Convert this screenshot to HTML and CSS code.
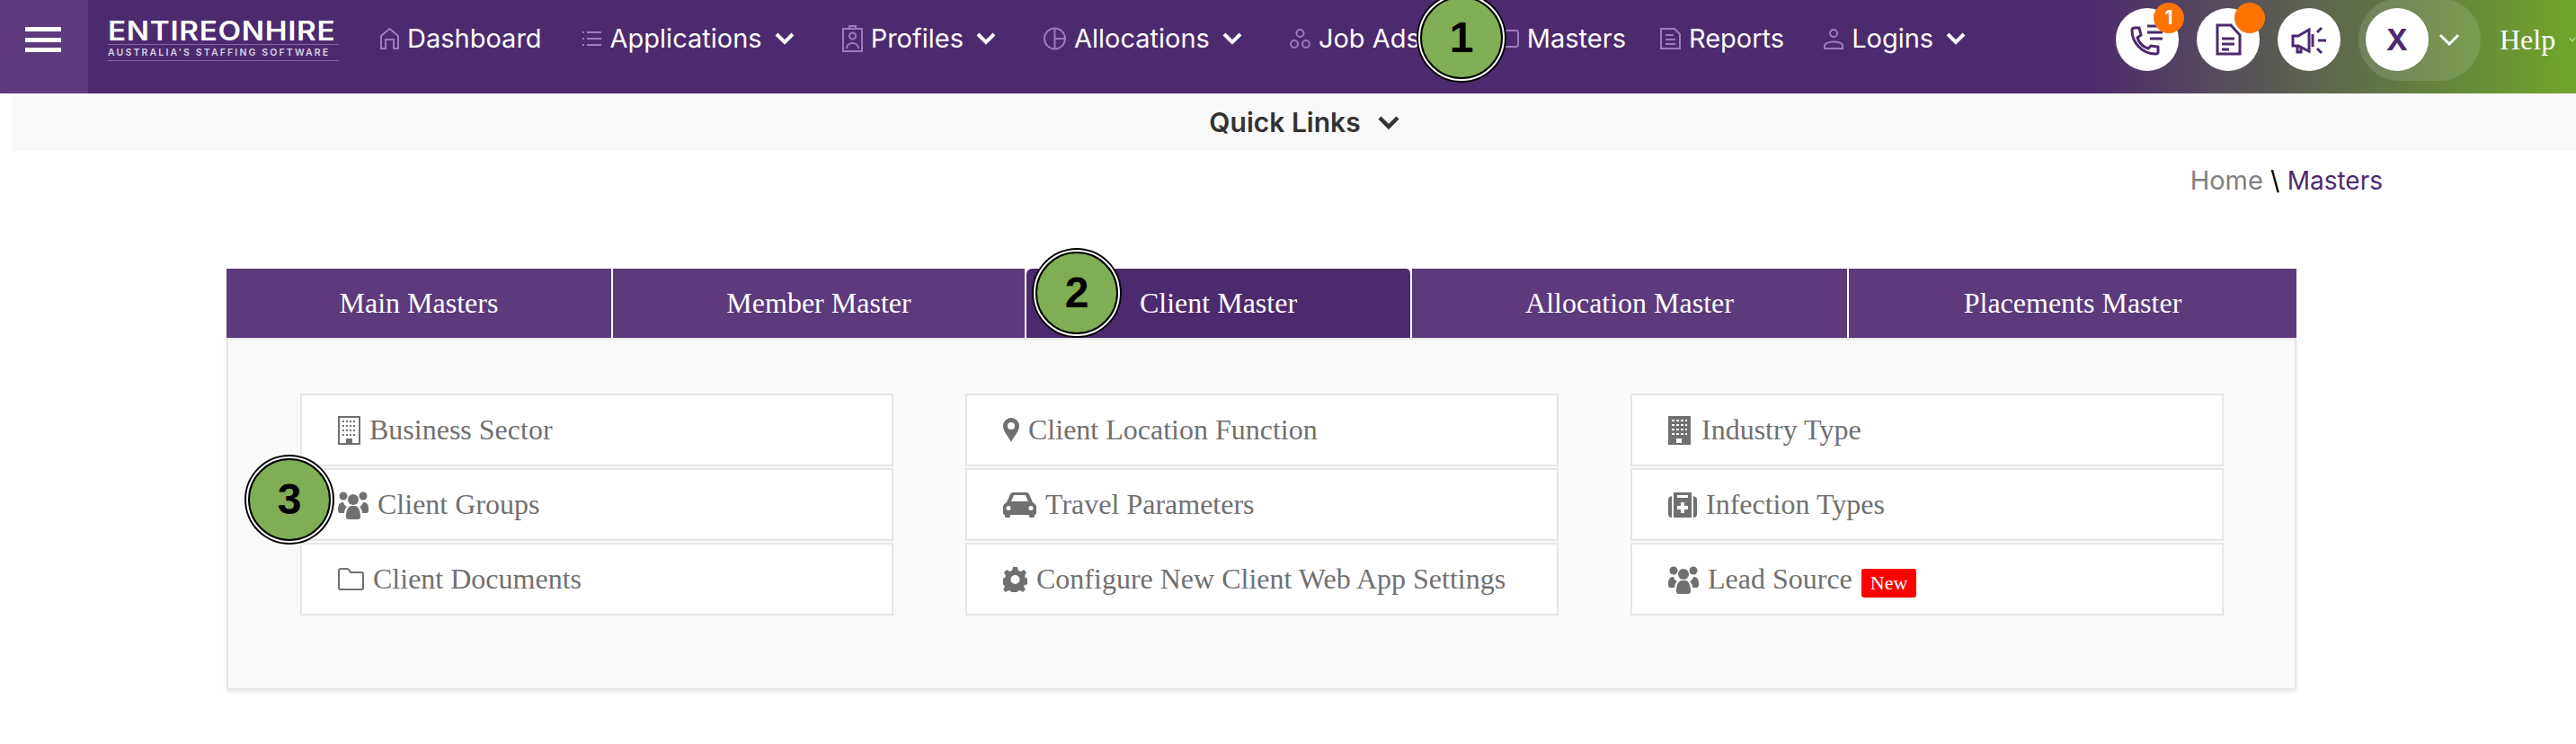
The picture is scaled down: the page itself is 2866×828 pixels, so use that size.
FILE: index.html
```html
<!DOCTYPE html>
<html lang="en">
<head>
  <meta charset="UTF-8">
  <title>Masters</title>
  <link rel="stylesheet" href="styles.css">
</head>
<body>

<!-- Top Navigation -->
<header class="topbar">
  <div class="menu-toggle"><span></span><span></span><span></span></div>
  <div class="topbar-row">
    <div class="logo">
      <div class="logo-name">ENTIREONHIRE</div>
      <div class="logo-tag">AUSTRALIA'S STAFFING SOFTWARE</div>
    </div>
    <nav class="nav">
      <a class="nav-item">
        <svg class="nav-icon" width="21" height="24" viewBox="0 0 21 24"><path d="M1 23V9l9.5-8L20 9v14h-5V13H6v10z"/></svg>Dashboard
      </a>
      <a class="nav-item">
        <svg class="nav-icon" width="23" height="24" viewBox="0 0 23 24"><path d="M6 5h16M6 12h16M6 19h16M1 5h2M1 12h2M1 19h2"/></svg>Applications
        <svg class="chev" width="22" height="14" viewBox="0 0 22 14"><path d="M2 2l9 9 9-9"/></svg>
      </a>
      <a class="nav-item">
        <svg class="nav-icon" width="23" height="30" viewBox="0 0 23 30"><path d="M1 4h21v25H1zM8 4V1h7v3"/><circle cx="11.5" cy="12" r="3.5"/><path d="M5 26c0-8 13-8 13 0"/></svg>Profiles
        <svg class="chev" width="22" height="14" viewBox="0 0 22 14"><path d="M2 2l9 9 9-9"/></svg>
      </a>
      <a class="nav-item">
        <svg class="nav-icon" width="25" height="26" viewBox="0 0 25 26"><circle cx="12.5" cy="13" r="11.5"/><path d="M12.5 1.500v23M12.500 13h11.500"/></svg>Allocations
        <svg class="chev" width="22" height="14" viewBox="0 0 22 14"><path d="M2 2l9 9 9-9"/></svg>
      </a>
      <a class="nav-item nav-jobs">
        <svg class="nav-icon" width="23" height="24" viewBox="0 0 23 24"><circle cx="11.500" cy="6" r="4"/><circle cx="5" cy="18" r="4"/><circle cx="18" cy="18" r="4"/></svg>Job Ads
      </a>
      <a class="nav-item nav-masters">
        <svg class="nav-icon" width="24" height="20" viewBox="0 0 24 20"><rect x="1" y="1" width="22" height="18" rx="2"/></svg>Masters
      </a>
      <a class="nav-item">
        <svg class="nav-icon" width="23" height="24" viewBox="0 0 23 24"><path d="M1 1h15l6 6v16H1zM6 8h9M6 13h11M6 18h11"/></svg>Reports
      </a>
      <a class="nav-item">
        <svg class="nav-icon" width="22" height="24" viewBox="0 0 22 24"><circle cx="11" cy="6" r="4"/><path d="M1 23v-3c0-6 20-6 20 0v3z"/></svg>Logins
        <svg class="chev" width="22" height="14" viewBox="0 0 22 14"><path d="M2 2l9 9 9-9"/></svg>
      </a>
    </nav>
    <div class="tools">
      <div class="tool">
        <svg width="70" height="70" viewBox="0 0 70 70" class="tool-icon"><path d="M18 25c0-2 1-3 3-3h5l2 8-4 3c2 6 6 10 12 12l3-3 8 1v6c0 1-1 2-3 2-14 0-26-12-26-26zM35 20h17M35 27h17M38 34h14"/></svg>
        <span class="dot">1</span>
      </div>
      <div class="tool">
        <svg width="70" height="70" viewBox="0 0 70 70" class="tool-icon"><path d="M23 19h15l10 11v21H23zM28 34h14M28 40h14M28 46h8"/></svg>
        <span class="dot"></span>
      </div>
      <div class="tool">
        <svg width="70" height="70" viewBox="0 0 70 70" class="tool-icon"><path d="M17 31h6l12-7v24l-12-6h-6zM22 42v7h4v-6M39 29v14M44 27l5-5M45 36h9M44 45l5 5"/></svg>
      </div>
      <div class="user-pill">
        <div class="tool user-x">X</div>
        <svg class="chev chev-thin" width="24" height="14" viewBox="0 0 24 14"><path d="M2 2l10 10L22 2"/></svg>
      </div>
      <div class="help">Help<svg class="chev chev-thin" width="24" height="14" viewBox="0 0 24 14"><path d="M2 2l10 10L22 2"/></svg></div>
    </div>
  </div>
</header>

<!-- Quick Links -->
<div class="quick-links">
  <span>Quick Links</span>
  <svg class="chev chev-dark" width="26" height="16" viewBox="0 0 26 16"><path d="M3 3l10 10L23 3"/></svg>
</div>

<div class="breadcrumb"><span class="crumb-home">Home</span> <span class="crumb-sep">\</span> <span class="crumb-page">Masters</span></div>

<!-- Masters Tabs -->
<div class="masters">
  <div class="tabs">
    <div class="tab">Main Masters</div>
    <div class="tab">Member Master</div>
    <div class="tab tab-active">Client Master</div>
    <div class="tab">Allocation Master</div>
    <div class="tab">Placements Master</div>
  </div>
  <div class="panel">
    <a class="card">
      <svg class="ico" width="25" height="32" viewBox="0 0 25 32"><path fill-rule="evenodd" d="M0 0h25v32H0zM2 2v28h7v-5h7v5h7V2z"/><path d="M5 5h2v2H5zM9 5h2v2H9zM13 5h2v2h-2zM17 5h2v2h-2zM5 10h2v2H5zM9 10h2v2H9zM13 10h2v2h-2zM17 10h2v2h-2zM5 15h2v2H5zM9 15h2v2H9zM13 15h2v2h-2zM17 15h2v2h-2zM5 20h2v2H5zM9 20h2v2H9zM13 20h2v2h-2zM17 20h2v2h-2z"/></svg>
      Business Sector
    </a>
    <a class="card">
      <svg class="ico" width="18" height="27" viewBox="0 0 18 27"><path fill-rule="evenodd" d="M9 0a9 9 0 0 1 9 9c0 6-6 12-9 18C6 21 0 15 0 9a9 9 0 0 1 9-9zm0 5a4 4 0 1 0 0 8 4 4 0 0 0 0-8z"/></svg>
      Client Location Function
    </a>
    <a class="card">
      <svg class="ico ico-wide-gap" width="25" height="32" viewBox="0 0 25 32"><path fill-rule="evenodd" d="M0 0h25v32H0zM4 4v2h3V4zM9 4v2h3V4zM14 4v2h3V4zM19 4v2h2V4zM4 9v2h3V9zM9 9v2h3V9zM14 9v2h3V9zM19 9v2h2V9zM4 14v2h3v-2zM9 14v2h3v-2zM14 14v2h3v-2zM19 14v2h2v-2zM4 19v2h3v-2zM9 19v2h3v-2zM14 19v2h3v-2zM19 19v2h2v-2zM9 25v5h6v-5z"/></svg>
      Industry Type
    </a>
    <a class="card">
      <svg class="ico" width="34" height="32" viewBox="0 0 34 32"><circle cx="6" cy="6" r="4.500"/><circle cx="28" cy="6" r="4.500"/><circle cx="17" cy="10" r="6"/><path d="M0 21c0-6 2-8 6-8 1 3 2 4 4 5-2 2-3 4-3 7H2c-1 0-2-1-2-4zM34 21c0-6-2-8-6-8-1 3-2 4-4 5 2 2 3 4 3 7h5c1 0 2-1 2-4zM9 29c0-8 3-12 6-12h4c3 0 6 4 6 12 0 2-1 3-3 3H12c-2 0-3-1-3-3z"/></svg>
      Client Groups
    </a>
    <a class="card">
      <svg class="ico" width="37" height="28" viewBox="0 0 37 28"><path fill-rule="evenodd" d="M4 11L8 2c.5-1 1.500-2 3-2h15c1.500 0 2.500 1 3 2l4 9c2 1 4 3 4 5v7c0 1-1 2-2 2v1c0 2-1 2-3 2s-3 0-3-2v-1H8v1c0 2-1 2-3 2s-3 0-3-2v-1c-1 0-2-1-2-2v-7c0-2 2-4 4-5zm5-1h19l-3-7H12zM6 15a2.500 2.500 0 1 0 0 5 2.500 2.500 0 0 0 0-5zm25 0a2.500 2.500 0 1 0 0 5 2.500 2.500 0 0 0 0-5z"/></svg>
      Travel Parameters
    </a>
    <a class="card">
      <svg class="ico" width="32" height="28" viewBox="0 0 32 28"><path fill-rule="evenodd" d="M6 0h20v28H6zM10 3v3h12V3zM14 11v4h-4v4h4v4h4v-4h4v-4h-4v-4zM0 8c0-2 1-3 4-4v24c-3 0-4-2-4-4zM32 8c0-2-1-3-4-4v24c3 0 4-2 4-4z"/></svg>
      Infection Types
    </a>
    <a class="card">
      <svg class="ico ico-line" width="29" height="25" viewBox="0 0 29 25"><path d="M1 22V3c0-1 1-2 2-2h7c1 0 1.500.5 2 1l2 3h12c1 0 2 1 2 2v15c0 1-1 2-2 2H3c-1 0-2-1-2-2z"/></svg>
      Client Documents
    </a>
    <a class="card">
      <svg class="ico" width="27" height="28" viewBox="0 0 27 28"><path fill-rule="evenodd" d="M11 0h5l1 4 3 1 3-2 3 3-2 4 1 2 3 1v6l-4 1-1 2 2 3-3 3-3-2-3 1-1 3h-5l-1-3-3-1-3 2-3-3 2-3-1-2-3-1v-6l4-1 1-2-2-4 3-3 3 2 3-1zm2.500 9a5 5 0 1 0 0 10 5 5 0 0 0 0-10z"/></svg>
      Configure New Client Web App Settings
    </a>
    <a class="card">
      <svg class="ico" width="34" height="32" viewBox="0 0 34 32"><circle cx="6" cy="6" r="4.500"/><circle cx="28" cy="6" r="4.500"/><circle cx="17" cy="10" r="6"/><path d="M0 21c0-6 2-8 6-8 1 3 2 4 4 5-2 2-3 4-3 7H2c-1 0-2-1-2-4zM34 21c0-6-2-8-6-8-1 3-2 4-4 5 2 2 3 4 3 7h5c1 0 2-1 2-4zM9 29c0-8 3-12 6-12h4c3 0 6 4 6 12 0 2-1 3-3 3H12c-2 0-3-1-3-3z"/></svg>
      Lead Source <span class="badge-new">New</span>
    </a>
  </div>
</div>

<!-- Step Markers -->
<div class="step step-1">1</div>
<div class="step step-2">2</div>
<div class="step step-3">3</div>

</body>
</html>
```

FILE: styles.css
```css
/* General Styling */
html, body {
  margin: 0;
  padding: 0;
  overflow: hidden;
}

body {
  position: relative;
  height: 828px;
  background: #ffffff;
  font-family: "Liberation Serif", serif;
}

/* Top Navigation */
.topbar {
  display: flex;
  height: 104px;
  overflow: hidden;
  background: linear-gradient(90deg, #4c2a6e 81%, #6fa62a 100%);
}

.menu-toggle {
  width: 98px;
  flex: none;
  background: #5c3a7c;
  padding: 30px 0 0 28px;
  box-sizing: border-box;
}

.menu-toggle span {
  display: block;
  width: 40px;
  height: 5px;
  margin-bottom: 6.500px;
  background: #ffffff;
}

.topbar-row {
  flex: 1;
  display: flex;
  align-items: center;
  height: 88px;
  white-space: nowrap;
}

.logo {
  width: 257px;
  margin-left: 22px;
  color: #ffffff;
  font-family: Inter, sans-serif;
}

.logo-name {
  font-size: 30px;
  line-height: 29px;
  font-weight: 600;
  letter-spacing: 0.600px;
  height: 29px;
  transform-origin: left;
  transform: scaleX(1.11);
}

.logo-tag {
  border-top: 1px solid #84699f;
  border-bottom: 1px solid #84699f;
  font-size: 10.500px;
  font-weight: 600;
  line-height: 17px;
  letter-spacing: 2.150px;
  color: #d9d0e2;
}

.nav {
  display: flex;
  align-items: center;
  gap: 44px;
  margin-left: 46px;
  margin-top: -3px;
  font-family: Inter, sans-serif;
  font-size: 29px;
  color: #ffffff;
}

.nav-item {
  display: flex;
  align-items: center;
  gap: 9px;
}

.nav-jobs {
  margin-right: 42px;
}

.nav-masters {
  margin-right: -6px;
}

.nav-icon {
  fill: none;
  stroke: #9a7cbd;
  stroke-width: 2;
}

.chev {
  fill: none;
  stroke: #ffffff;
  stroke-width: 4;
  margin: 0 9px 0 5px;
}

.chev-thin {
  stroke-width: 3;
  margin: 0;
}

.chev-dark {
  stroke: #333333;
  stroke-width: 4.500;
  margin: 0;
}

.tools {
  display: flex;
  align-items: center;
  gap: 20px;
  margin-left: auto;
}

.tool {
  position: relative;
  width: 70px;
  height: 70px;
  border-radius: 50%;
  background: #ffffff;
}

.tool-icon {
  fill: none;
  stroke: #4c2a6e;
  stroke-width: 3;
}

.dot {
  position: absolute;
  top: -6px;
  left: 42px;
  width: 34px;
  height: 34px;
  border-radius: 50%;
  background: #ff7300;
  color: #ffffff;
  font: bold 21px/34px Inter, sans-serif;
  text-align: center;
}

.user-pill {
  display: flex;
  align-items: center;
  gap: 11px;
  width: 136px;
  height: 92px;
  padding-left: 8px;
  box-sizing: border-box;
  border-radius: 46px;
  background: rgba(255, 255, 255, 0.12);
}

.user-x {
  color: #4c2a6e;
  font: bold 33px/70px Inter, sans-serif;
  text-align: center;
}

.help {
  display: flex;
  align-items: center;
  gap: 15px;
  width: 85px;
  margin-left: 1px;
  color: #ffffff;
  font-size: 32px;
}

/* Quick Links */
.quick-links {
  display: flex;
  align-items: center;
  justify-content: center;
  gap: 18px;
  height: 64px;
  margin-left: 13px;
  padding-left: 24px;
  background: #f9f9f9;
  color: #333333;
  font-family: Inter, sans-serif;
  font-size: 30px;
  font-weight: 600;
}

.breadcrumb {
  height: 131px;
  padding: 15px 215px 0 0;
  box-sizing: border-box;
  text-align: right;
  font-family: Inter, sans-serif;
  font-size: 29px;
  line-height: 36px;
}

.crumb-home {
  color: #808080;
}

.crumb-sep {
  color: #000000;
}

.crumb-page {
  color: #4c2a6e;
  font-size: 28px;
}

/* Masters Tabs */
.masters {
  width: 2303px;
  margin-left: 252px;
}

.tabs {
  display: grid;
  grid-template-columns: 430px 460px 429px 486px 498px;
  height: 77px;
}

.tab {
  display: flex;
  align-items: center;
  justify-content: center;
  background: #5c3a7c;
  color: #ffffff;
  font-size: 32px;
  border-right: 2px solid #ffffff;
}

.tab:last-child {
  border-right: none;
}

.tab-active {
  background: #4c2a6e;
  border-radius: 6px 6px 0 0;
}

.panel {
  display: grid;
  grid-template-columns: repeat(3, 660px);
  grid-auto-rows: 81px;
  gap: 2px 80px;
  height: 392px;
  padding: 60px 0 0 80px;
  box-sizing: border-box;
  background: #f9f9f9;
  border: 2px solid #e6e6e6;
  border-radius: 0 0 3px 3px;
  box-shadow: 0 3px 5px rgba(0, 0, 0, 0.08);
}

.card {
  display: flex;
  align-items: center;
  gap: 10px;
  padding-left: 40px;
  background: #ffffff;
  border: 2px solid #e6e6e6;
  color: #707070;
  font-size: 32px;
  white-space: nowrap;
}

.ico {
  flex: none;
  fill: #707070;
}

.ico-wide-gap {
  margin-right: 2px;
}

.ico-line {
  fill: none;
  stroke: #707070;
  stroke-width: 2;
}

.badge-new {
  margin-top: 8px;
  padding: 0 10px;
  background: #ff0000;
  border-radius: 3px;
  color: #ffffff;
  font-size: 22px;
  line-height: 32px;
}

/* Step Markers */
.step {
  position: absolute;
  width: 88px;
  height: 88px;
  line-height: 88px;
  border-radius: 50%;
  background: #7fae55;
  border: 2px solid #000000;
  outline: 2px solid #ffffff;
  box-shadow: 0 0 0 4px #000000;
  color: #000000;
  font-family: "Liberation Sans", sans-serif;
  font-size: 48px;
  font-weight: bold;
  text-align: center;
}

.step-1 {
  left: 1580px;
  top: -4px;
}

.step-2 {
  left: 1152px;
  top: 280px;
}

.step-3 {
  left: 276px;
  top: 510px;
}
```
